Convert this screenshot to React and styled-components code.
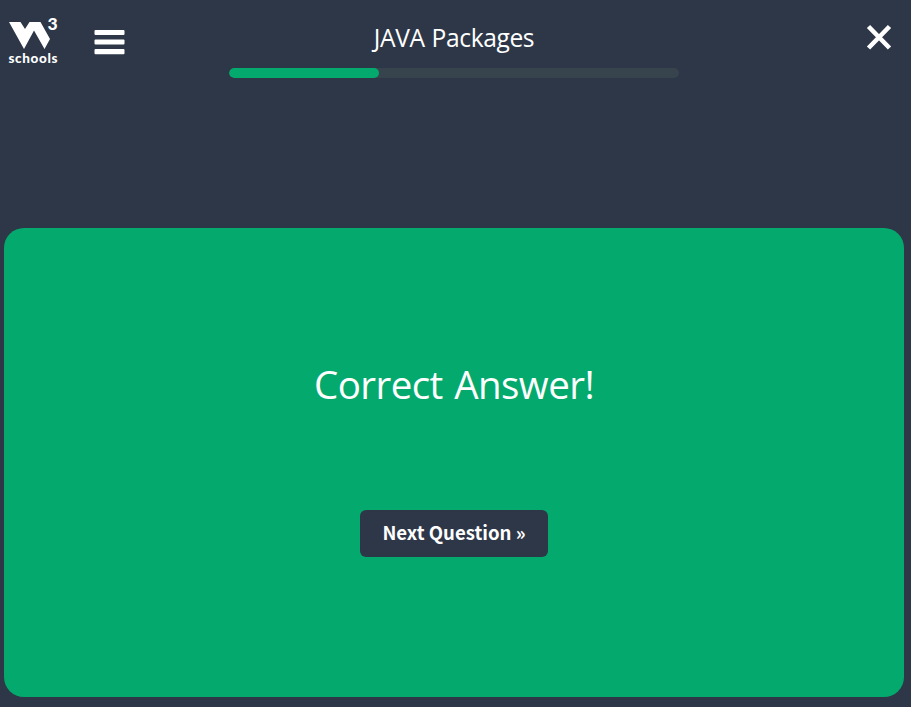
import React from "react";
import styled, { createGlobalStyle } from "styled-components";

const Global = createGlobalStyle`
  * { box-sizing: border-box; }
  body { margin: 0; background: #2d3748; color: #fff; font-family: "Open Sans", "Noto Sans", sans-serif; }
`;
const Page = styled.div`
  height: 707px;
  display: flex;
  flex-direction: column;
  overflow: hidden;
`;
const Header = styled.header`
  height: 228px;
  display: grid;
  grid-template-columns: 229px 450px 1fr;
`;
const Left = styled.div`
  display: flex;
  align-items: flex-start;
`;
const Logo = styled.a`
  display: block;
  width: 94px;
  height: 72px;
`;
const IconButton = styled.button`
  border: 0;
  padding: 0;
  background: none;
  color: #fff;
  line-height: 0;
  height: max-content;
`;
const MenuButton = styled(IconButton)`
  margin-top: 29px;
`;
const CloseButton = styled(IconButton)`
  justify-self: end;
  margin: 24px 19px 0 0;
`;
const Progress = styled.div`
  display: flex;
  flex-direction: column;
  align-items: center;
`;
const Title = styled.h1`
  margin: 20px 0 12px;
  font-size: 24.6px;
  line-height: 36px;
  font-weight: 400;
  letter-spacing: -0.4px;
  word-spacing: 1px;
  white-space: nowrap;
`;
const Track = styled.div`
  width: 450px;
  height: 10px;
  border-radius: 5px;
  background: #38444d;
  overflow: hidden;
`;
const Fill = styled.div`
  width: 150px;
  height: 10px;
  border-radius: 5px;
  background: #04aa6d;
`;
const Card = styled.main`
  width: 900px;
  height: 469px;
  margin-left: 4px;
  border-radius: 20px;
  background: #04aa6d;
  display: flex;
  flex-direction: column;
  align-items: center;
`;
const Message = styled.h2`
  margin: 126px 0 96px;
  font-size: 38.5px;
  line-height: 60px;
  font-weight: 400;
  letter-spacing: -0.55px;
  word-spacing: 2px;
  white-space: nowrap;
`;
const NextButton = styled.button`
  width: 188px;
  height: 47px;
  border: 0;
  border-radius: 6px;
  background: #2d3748;
  color: #fff;
  padding: 0 0 3px;
  font: 700 18.6px/44px "Noto Sans CJK SC", sans-serif;
  white-space: nowrap;
`;
const LogoText = styled.text`
  font-family: Lato, sans-serif;
  font-weight: 900;
  fill: #fff;
`;

export default function App() {
  return (
    <Page>
      <Global />
      <Header>
        <Left>
          <Logo aria-label="w3schools">
            <svg width="70" height="72">
              <path fill="#fff" d="M9 22H20.5L25 29L29.5 22H40.5L50 39L44.5 49L34 30.5L24 49Z" />
              <LogoText x="47.5" y="30" fontSize="17.5">3</LogoText>
              <LogoText x="8.5" y="63" fontSize="13.5" textLength="49">schools</LogoText>
            </svg>
          </Logo>
          <MenuButton aria-label="Menu">
            <svg width="31" height="27" fill="#fff">
              <rect x="0.5" y="1" width="30" height="5" rx="1" />
              <rect x="0.5" y="10.4" width="30" height="5.2" rx="1" />
              <rect x="0.5" y="20" width="30" height="5.3" rx="1" />
            </svg>
          </MenuButton>
        </Left>
        <Progress>
          <Title>JAVA Packages</Title>
          <Track><Fill /></Track>
        </Progress>
        <CloseButton aria-label="Close">
          <svg width="26" height="27" stroke="#fff" strokeWidth="4.6">
            <path d="M2.5 2.5L23.5 24M23.5 2.5L2.5 24" />
          </svg>
        </CloseButton>
      </Header>
      <Card>
        <Message>Correct Answer!</Message>
        <NextButton>Next Question »</NextButton>
      </Card>
    </Page>
  );
}
